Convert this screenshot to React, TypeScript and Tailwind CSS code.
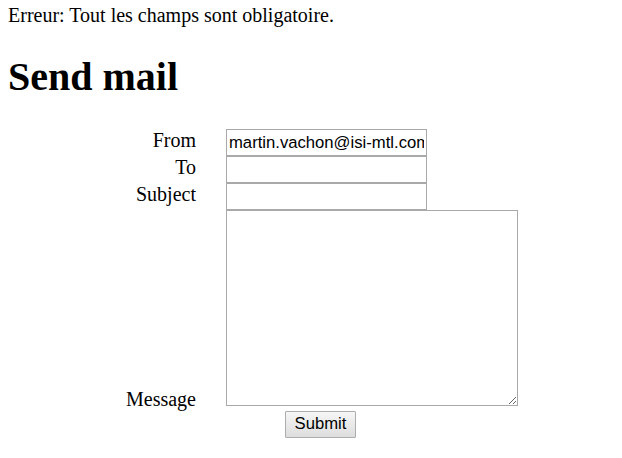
import React from "react";

export default function App() {
  return (
    <div className="min-h-[458px] bg-white px-2 font-['Liberation_Serif',serif] text-black">
      <div className="pt-[4px] text-[20px] leading-[23px]">
        Erreur: Tout les champs sont obligatoire.
      </div>
      <h1 className="my-[27px] text-[40px] font-bold leading-[46px]">Send mail</h1>
      <form className="ml-[115px] w-[395px] pt-[2px]" onSubmit={(e) => e.preventDefault()}>
        <div className="flex h-[27px] gap-[30px]">
          <label className="w-[73px] text-right text-[20px] leading-[23px]">From</label>
          <input
            readOnly
            value="martin.vachon@isi-mtl.com"
            className="h-[27px] w-[201px] border border-[#a9a9a9] bg-white px-[2px] font-['Liberation_Sans',Arial,sans-serif] text-[16.67px] text-black outline-none"
          />
        </div>
        <div className="flex h-[27px] gap-[30px]">
          <label className="w-[73px] text-right text-[20px] leading-[23px]">To</label>
          <input className="h-[27px] w-[201px] border border-[#a9a9a9] bg-white px-[2px] font-['Liberation_Sans',Arial,sans-serif] text-[16.67px] outline-none" />
        </div>
        <div className="flex h-[27px] gap-[30px]">
          <label className="w-[73px] text-right text-[20px] leading-[23px]">Subject</label>
          <input className="h-[27px] w-[201px] border border-[#a9a9a9] bg-white px-[2px] font-['Liberation_Sans',Arial,sans-serif] text-[16.67px] outline-none" />
        </div>
        <div className="flex items-end gap-[30px]">
          <label className="mb-[-5px] w-[73px] text-right text-[20px] leading-[23px]">Message</label>
          <textarea className="block h-[196px] w-[292px] border border-[#a9a9a9] bg-white p-[2px] font-['Liberation_Mono',monospace] text-[16px] outline-none" />
        </div>
        <div className="mt-[5px] flex justify-center">
          <button
            type="submit"
            className="h-[27px] w-[71px] rounded-[1px] border border-[#adadad] bg-gradient-to-b from-[#f6f6f6] to-[#dddddd] font-['Liberation_Sans',Arial,sans-serif] text-[16.67px] leading-none text-black"
          >
            Submit
          </button>
        </div>
      </form>
    </div>
  );
}
